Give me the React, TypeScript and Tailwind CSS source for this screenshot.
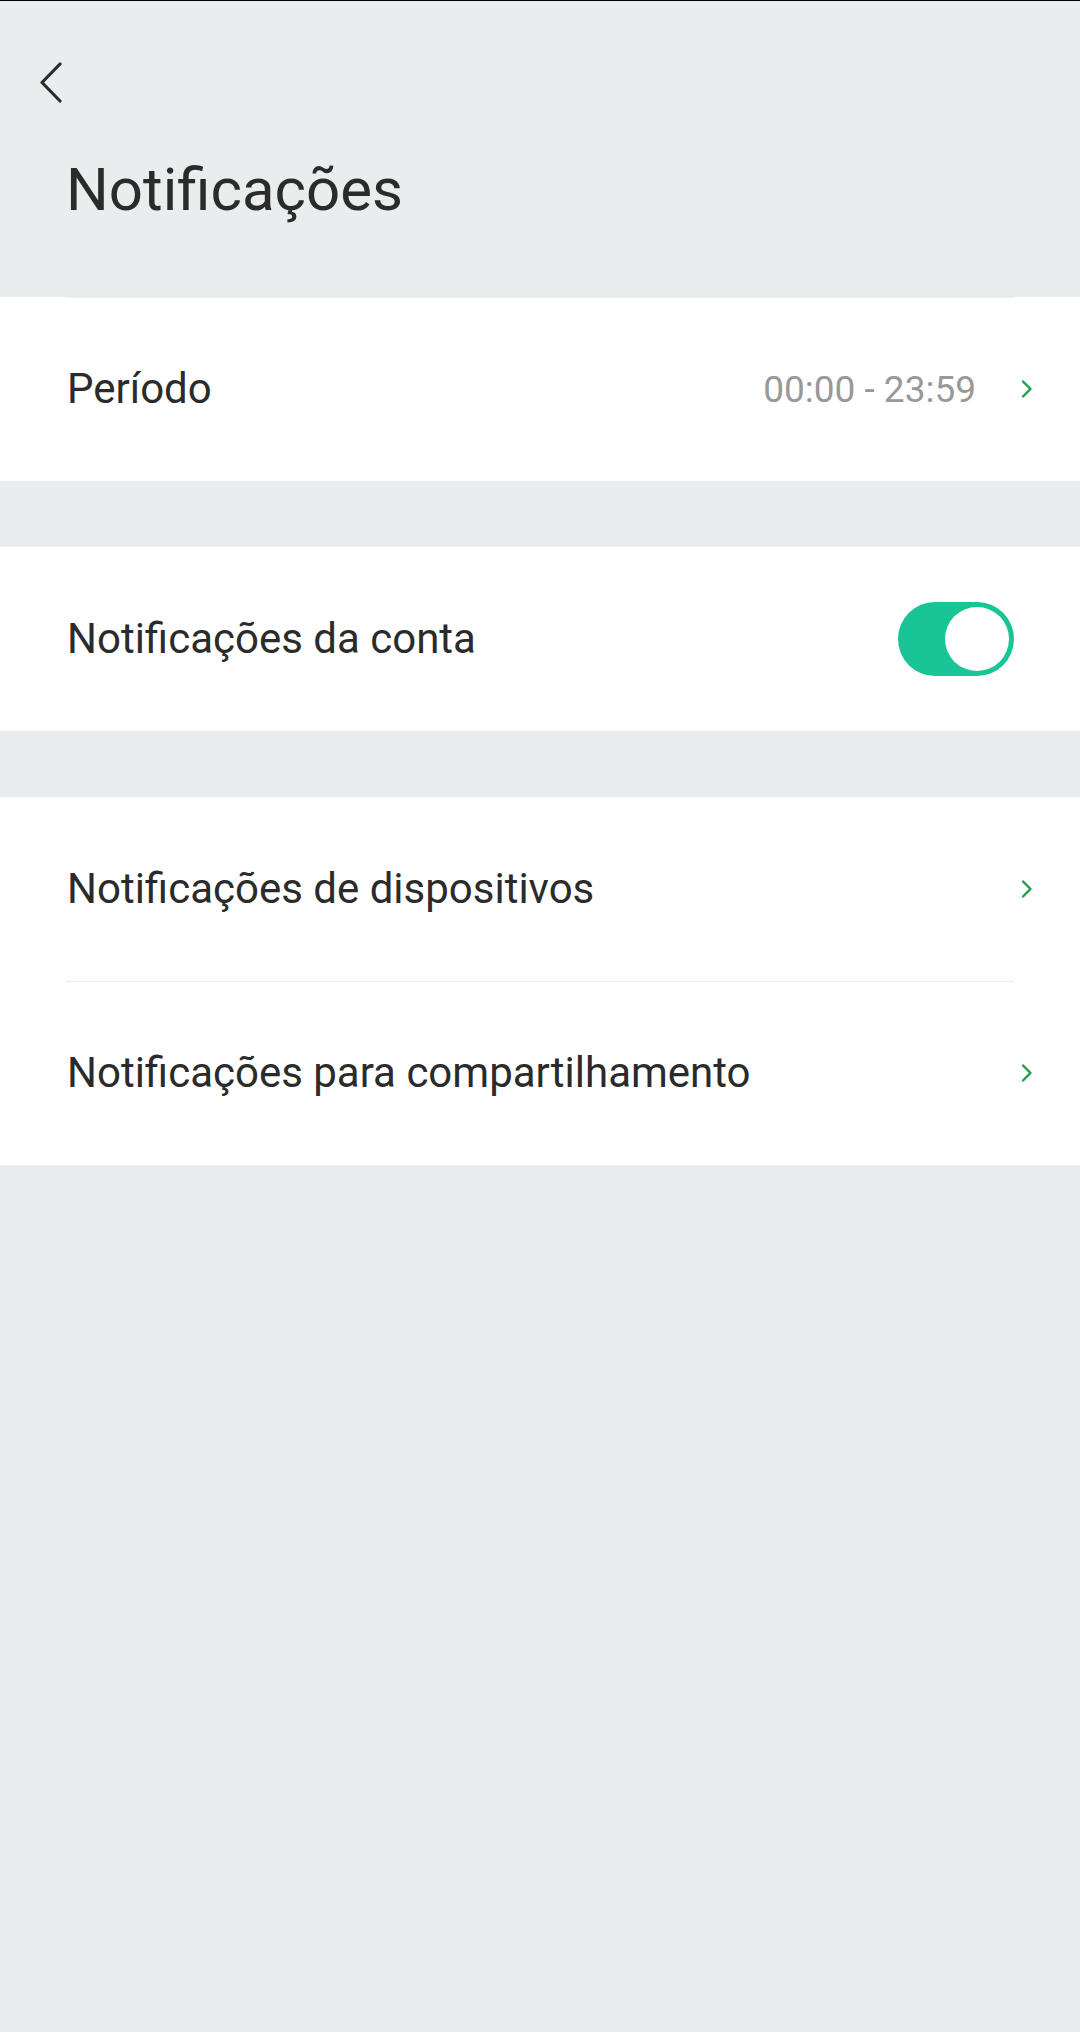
import React from "react";

const Chevron = () => (
  <svg width="14" height="20" viewBox="0 0 14 20" fill="none" className="shrink-0">
    <path d="M3 2.5L10.5 10L3 17.5" stroke="#1e9e4a" strokeWidth="2.4" strokeLinecap="round" strokeLinejoin="round" />
  </svg>
);

const Toggle = ({ on }: { on: boolean }) => (
  <div
    className={`w-[116px] h-[74px] rounded-full p-[5px] flex items-center ${
      on ? "bg-[#19c597] justify-end" : "bg-[#d5d9db] justify-start"
    }`}
  >
    <div className="w-[64px] h-[64px] rounded-full bg-white" />
  </div>
);

function Row({
  label,
  value,
  divider,
  right,
}: {
  label: string;
  value?: string;
  divider?: boolean;
  right?: React.ReactNode;
}) {
  return (
    <div className="relative h-[184px] flex items-center pl-[67px] pr-[46px]">
      {divider && <div className="absolute top-0 left-[66px] right-[66px] h-px bg-[#eeeeee]" />}
      <span className="flex-1 text-[42px] text-[#2b2b2b] leading-none">{label}</span>
      {value && <span className="text-[37px] text-[#999999] mr-[44px] leading-none">{value}</span>}
      {right ?? <Chevron />}
    </div>
  );
}

export default function App() {
  return (
    <div
      className="w-[1080px] min-h-[2032px] bg-[#e9edee] border-t border-black"
      style={{ fontFamily: "Roboto, 'Noto Sans', sans-serif" }}
    >
      {/* Header */}
      <div className="h-[296px] flex flex-col">
        <div className="h-[61px]" />
        <button className="ml-[38px] w-[28px] h-[42px] flex items-center">
          <svg width="26" height="42" viewBox="0 0 26 42" fill="none">
            <path d="M22 2L4 20.5L22 39" stroke="#2b2b2b" strokeWidth="3.2" strokeLinecap="round" strokeLinejoin="round" />
          </svg>
        </button>
        <h1 className="ml-[66px] mt-[56px] text-[60px] leading-none text-[#2b2b2b] font-normal">Notificações</h1>
      </div>

      <div className="bg-white">
        <Row label="Período" value="00:00 - 23:59" divider />
      </div>

      <div className="h-[66px]" />

      <div className="bg-white">
        <div className="h-[184px] flex items-center pl-[67px] pr-[66px]">
          <span className="flex-1 text-[42px] text-[#2b2b2b] leading-none">Notificações da conta</span>
          <Toggle on />
        </div>
      </div>

      <div className="h-[66px]" />

      <div className="bg-white">
        <Row label="Notificações de dispositivos" />
        <Row label="Notificações para compartilhamento" divider />
      </div>
    </div>
  );
}
